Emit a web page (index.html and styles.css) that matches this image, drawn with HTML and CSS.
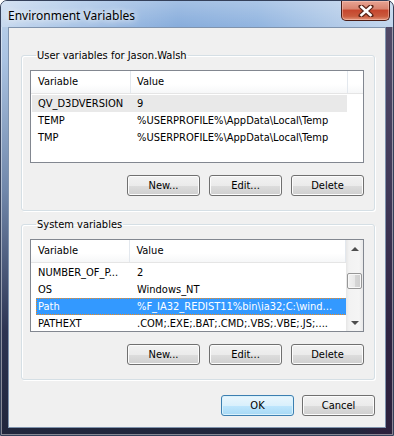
FILE: index.html
```html
<!DOCTYPE html>
<html>
  <head>
    <link rel="stylesheet" href="styles.css">
  </head>
  <body>
    <div class="window">
      <div class="titlebar">
        <span class="title">Environment Variables</span>
        <div class="close">
          <svg width="16" height="12" viewBox="0 0 16 12">
            <path d="M3 1.5 L13 10.5 M13 1.5 L3 10.5" stroke="#5a2418" stroke-width="5" stroke-linecap="round"/>
            <path d="M3.5 2 L12.5 10 M12.5 2 L3.5 10" stroke="#ffffff" stroke-width="2.6" stroke-linecap="square"/>
          </svg>
        </div>
      </div>

      <div class="client">
        <fieldset class="group">
          <legend>User variables for Jason.Walsh</legend>
          <div class="list">
            <div class="list-main">
              <div class="list-head">
                <span class="head-name">Variable</span>
                <span class="head-value">Value</span>
                <span class="head-fill"></span>
              </div>
              <div class="list-rows">
                <div class="row inactive"><span class="cell-name">QV_D3DVERSION</span><span class="cell-value">9</span></div>
                <div class="row"><span class="cell-name">TEMP</span><span class="cell-value">%USERPROFILE%\AppData\Local\Temp</span></div>
                <div class="row"><span class="cell-name">TMP</span><span class="cell-value">%USERPROFILE%\AppData\Local\Temp</span></div>
              </div>
            </div>
          </div>
          <div class="buttons">
            <button class="btn">New...</button>
            <button class="btn">Edit...</button>
            <button class="btn">Delete</button>
          </div>
        </fieldset>

        <fieldset class="group">
          <legend>System variables</legend>
          <div class="list">
            <div class="list-main">
              <div class="list-head">
                <span class="head-name">Variable</span>
                <span class="head-value">Value</span>
              </div>
              <div class="list-rows">
                <div class="row"><span class="cell-name">NUMBER_OF_P...</span><span class="cell-value">2</span></div>
                <div class="row"><span class="cell-name">OS</span><span class="cell-value">Windows_NT</span></div>
                <div class="row selected"><span class="cell-name">Path</span><span class="cell-value">%F_IA32_REDIST11%bin\ia32;C:\wind...</span></div>
                <div class="row"><span class="cell-name">PATHEXT</span><span class="cell-value">.COM;.EXE;.BAT;.CMD;.VBS;.VBE;.JS;....</span></div>
              </div>
            </div>
            <div class="scrollbar">
              <div class="sb-arrow"><span class="tri-up"></span></div>
              <div class="sb-track"><div class="sb-thumb"></div></div>
              <div class="sb-arrow"><span class="tri-down"></span></div>
            </div>
          </div>
          <div class="buttons">
            <button class="btn">New...</button>
            <button class="btn">Edit...</button>
            <button class="btn">Delete</button>
          </div>
        </fieldset>

        <div class="buttons dialog-buttons">
          <button class="btn default">OK</button>
          <button class="btn">Cancel</button>
        </div>
      </div>
    </div>
  </body>
</html>
```

FILE: styles.css
```css
* {box-sizing: border-box;}

body {
  margin: 0;
  background: #ffffff;
  font-family: "DejaVu Sans Condensed", "DejaVu Sans", sans-serif;
  font-stretch: condensed;
  font-size: 11px;
  color: #000000;
}

.window {
  width: 394px;
  height: 436px;
  display: flex;
  flex-direction: column;
  padding: 0 7px 7px 7px;
  border: 1px solid #34405a;
  border-radius: 7px 7px 0 0;
  background:
    linear-gradient(to right, rgba(0,0,0,0) 90%, rgba(48,30,60,0.75) 97%),
    linear-gradient(to bottom, #bdd3ec 0, #a9c2e1 60px, #7087aa 190px, #2d3452 330px, #20253b 436px);
  box-shadow: inset 0 0 0 1px rgba(255,255,255,0.45);
}

/* title bar */
.titlebar {
  height: 28px;
  display: flex;
  align-items: flex-start;
  margin: 0 -7px;
  padding: 0 3px 0 7px;
  border-radius: 6px 6px 0 0;
  background:
    linear-gradient(to bottom, rgba(255,255,255,0.25), rgba(255,255,255,0) 28px),
    linear-gradient(to right, #c6d8ee 0%, #a6c3e6 20%, #85abdb 45%, #8fb3df 65%, #b3cbe8 88%, #c0d4ec 100%);
}

.title {
  font-family: "Noto Sans", "Open Sans", sans-serif;
  font-stretch: normal;
  font-size: 12px;
  line-height: 16px;
  margin-top: 7px;
  color: #000000;
  text-shadow: 0 0 6px #ffffff, 0 0 10px rgba(255,255,255,0.8);
}

.close {
  margin-left: auto;
  width: 49px;
  height: 20px;
  display: flex;
  align-items: center;
  justify-content: center;
  border: 1px solid #4a1c15;
  border-top: none;
  border-radius: 0 0 5px 5px;
  background: linear-gradient(to bottom, #e8a493 0%, #d98571 40%, #c6472e 50%, #c95a3d 80%, #e2957a 100%);
  box-shadow: inset 0 0 0 1px rgba(255,210,200,0.45);
}

/* client area */
.client {
  flex: 1;
  background: #f0f0f0;
  border: 1px solid #7f93ad;
  padding: 0 10px 11px 12px;
  display: flex;
  flex-direction: column;
}

.group {
  margin: 21px 0 0 0;
  padding: 8px 10px 14px 8px;
  border: 1px solid #d5dfe5;
  border-radius: 3px;
  box-shadow: 1px 1px 0 #ffffff, inset 1px 1px 0 #ffffff;
  min-width: 0;
}

.group + .group {
  margin-top: 7px;
}

.group legend {
  padding: 0 1px;
  margin-left: 6px;
  line-height: 13px;
}

/* list view */
.list {
  height: 93px;
  display: flex;
  background: #ffffff;
  border: 1px solid #828790;
  overflow: hidden;
}

.list-main {
  flex: 1;
  min-width: 0;
}

.list-head {
  height: 23px;
  display: flex;
  border-bottom: 1px solid #e5e5e5;
  background: linear-gradient(to bottom, #ffffff 0%, #ffffff 60%, #f6f7f8 100%);
  line-height: 22px;
}

.head-name {
  width: 100px;
  padding-left: 7px;
  border-right: 1px solid #e3e8ee;
}

.head-value {
  width: 217px;
  padding-left: 6px;
  border-right: 1px solid #e3e8ee;
}

.head-fill {
  flex: 1;
}

.list-rows {
  padding-top: 1px;
}

.row {
  display: flex;
  height: 17px;
  line-height: 17px;
  width: 315px;
  margin-left: 1px;
  white-space: nowrap;
}

.cell-name {
  width: 99px;
  padding-left: 6px;
  overflow: hidden;
}

.cell-value {
  width: 216px;
  padding-left: 6px;
  overflow: hidden;
}

.row.inactive {
  background: #e9e9e9;
}

.row.selected {
  margin-left: 5px;
  width: 311px;
  background: #3399ff;
  color: #ffffff;
  outline: 1px dotted #f08a1c;
  outline-offset: -1px;
}

.row.selected .cell-name {
  width: 95px;
  padding-left: 2px;
}

/* scroll bar */
.scrollbar {
  width: 17px;
  display: flex;
  flex-direction: column;
  background: linear-gradient(to right, #e6e6e6 0, #f2f2f2 3px, #f5f5f5 13px, #e9e9e9 17px);
}

.sb-arrow {
  height: 17px;
  display: flex;
  align-items: center;
  justify-content: center;
}

.tri-up {
  width: 0;
  height: 0;
  border-left: 4px solid transparent;
  border-right: 4px solid transparent;
  border-bottom: 4px solid #4d4d4d;
}

.tri-down {
  width: 0;
  height: 0;
  border-left: 4px solid transparent;
  border-right: 4px solid transparent;
  border-top: 4px solid #4d4d4d;
}

.sb-track {
  flex: 1;
  padding-top: 16px;
}

.sb-thumb {
  height: 16px;
  margin: 0 1px;
  border: 1px solid #979797;
  border-radius: 2px;
  background: linear-gradient(to right, #f2f2f2 0%, #e8e8e8 50%, #d6d6d6 51%, #cfcfcf 100%);
  box-shadow: inset 0 0 0 1px #f8f8f8;
}

/* buttons */
.buttons {
  display: flex;
  justify-content: flex-end;
  gap: 9px;
  margin-top: 12px;
}

.btn {
  width: 73px;
  height: 21px;
  padding: 0;
  font-family: inherit;
  font-stretch: condensed;
  font-size: 11px;
  color: #000000;
  border: 1px solid #707070;
  border-radius: 3px;
  background: linear-gradient(to bottom, #f2f2f2 0%, #ebebeb 50%, #dddddd 51%, #cfcfcf 100%);
  box-shadow: inset 0 0 0 1px #fcfcfc;
}

.btn.default {
  border-color: #3c7fb1;
  background: linear-gradient(to bottom, #eaf6fd 0%, #d9f0fc 50%, #bee6fd 51%, #a7d9f5 100%);
  box-shadow: inset 0 0 0 1px #daf2fc;
}

.dialog-buttons {
  margin-top: 15px;
  gap: 8px;
}
```
